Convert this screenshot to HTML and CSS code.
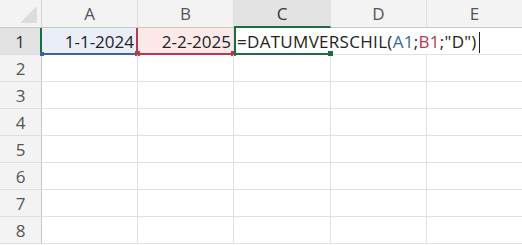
FILE: index.html
```html
<!DOCTYPE html>
<html lang="nl">
<head>
  <meta charset="UTF-8">
  <meta name="viewport" content="width=device-width, initial-scale=1.0">
  <title>Werkblad</title>
  <link rel="stylesheet" href="styles.css">
</head>
<body>
  <div class="sheet">
    <div class="corner"><span class="tri"></span></div>
    <div class="colhead">A</div>
    <div class="colhead">B</div>
    <div class="colhead active">C</div>
    <div class="colhead">D</div>
    <div class="colhead last">E</div>

    <div class="rowhead active">1</div>
    <div class="cell num ref-a">1-1-2024</div>
    <div class="cell num ref-b">2-2-2025</div>
    <div class="cell edit"><span class="formula">=DATUMVERSCHIL(<span class="blue">A1</span>;<span class="red">B1</span>;"D")<span class="caret"></span></span></div>
    <div class="cell open"></div>
    <div class="cell open last"></div>

    <div class="rowhead">2</div>
    <div class="cell"></div><div class="cell"></div><div class="cell"></div><div class="cell"></div><div class="cell last"></div>
    <div class="rowhead">3</div>
    <div class="cell"></div><div class="cell"></div><div class="cell"></div><div class="cell"></div><div class="cell last"></div>
    <div class="rowhead">4</div>
    <div class="cell"></div><div class="cell"></div><div class="cell"></div><div class="cell"></div><div class="cell last"></div>
    <div class="rowhead">5</div>
    <div class="cell"></div><div class="cell"></div><div class="cell"></div><div class="cell"></div><div class="cell last"></div>
    <div class="rowhead">6</div>
    <div class="cell"></div><div class="cell"></div><div class="cell"></div><div class="cell"></div><div class="cell last"></div>
    <div class="rowhead">7</div>
    <div class="cell"></div><div class="cell"></div><div class="cell"></div><div class="cell"></div><div class="cell last"></div>
    <div class="rowhead">8</div>
    <div class="cell"></div><div class="cell"></div><div class="cell"></div><div class="cell"></div><div class="cell last"></div>
  </div>
</body>
</html>
```

FILE: styles.css
```css
* {
  box-sizing: border-box;
}

body {
  margin: 0;
  background-color: #fff;
  font-family: "Open Sans", "Noto Sans", sans-serif;
  font-size: 17px;
  color: #222;
}

.sheet {
  display: grid;
  grid-template-columns: 42px 96px 96px 97px 96px 95px;
  grid-template-rows: 28px repeat(8, 27px);
  width: 522px;
}

.corner {
  position: relative;
  background-color: #f3f3f3;
  border-right: 1px solid #d6d6d6;
  border-bottom: 1px solid #c8c8c8;
}

.corner .tri {
  position: absolute;
  right: 4px;
  bottom: 4px;
  width: 0;
  height: 0;
  border-left: 17px solid transparent;
  border-bottom: 17px solid #dcdcdc;
}

.colhead {
  display: flex;
  align-items: center;
  justify-content: center;
  background-color: #f3f3f3;
  color: #555;
  border-right: 1px solid #dedede;
  border-bottom: 1px solid #c8c8c8;
}

.colhead.active {
  background-color: #e3e3e3;
  color: #333;
  border-bottom: 2px solid #1e6c41;
}

.colhead.last,
.cell.last {
  border-right: none;
}

.rowhead {
  display: flex;
  align-items: center;
  justify-content: center;
  background-color: #f3f3f3;
  color: #555;
  border-right: 1px solid #c8c8c8;
  border-bottom: 1px solid #dedede;
}

.rowhead.active {
  background-color: #e3e3e3;
  color: #333;
  border-right: 2px solid #1e6c41;
}

.cell {
  position: relative;
  display: flex;
  align-items: center;
  border-right: 1px solid #e1e1e1;
  border-bottom: 1px solid #e1e1e1;
  white-space: nowrap;
}

.cell.num {
  justify-content: flex-end;
  padding-right: 2px;
  padding-top: 1px;
}

.ref-a {
  background-color: #e9eef8;
  border-right: 2px solid #b8394a;
  border-bottom: 2px solid #3c64a4;
}

.ref-a::after {
  content: "";
  position: absolute;
  left: -2px;
  bottom: -3px;
  width: 4px;
  height: 4px;
  background-color: #3c64a4;
}

.ref-b {
  background-color: #fbe9ea;
  border-bottom: 2px solid #b8394a;
}

.ref-b::before,
.ref-b::after {
  content: "";
  position: absolute;
  bottom: -3px;
  width: 5px;
  height: 5px;
  background-color: #b8394a;
}

.ref-b::before {
  left: -3px;
}

.ref-b::after {
  right: -3px;
}

.edit {
  overflow: visible;
  border-left: 2px solid #1e6c41;
  border-bottom: 2px solid #1e6c41;
  border-right: none;
  padding-left: 1px;
  padding-top: 1px;
  z-index: 1;
}

.edit::after {
  content: "";
  position: absolute;
  right: -2px;
  bottom: -3px;
  width: 5px;
  height: 5px;
  background-color: #1e6c41;
}

.formula {
  position: relative;
  color: #222;
  letter-spacing: 0.3px;
}

.formula .blue {
  color: #3c64a4;
}

.formula .red {
  color: #b8394a;
}

.caret {
  display: inline-block;
  width: 1px;
  height: 21px;
  margin-left: 2px;
  vertical-align: -5px;
  background-color: #222;
}

.cell.open {
  border-right: none;
}
```
